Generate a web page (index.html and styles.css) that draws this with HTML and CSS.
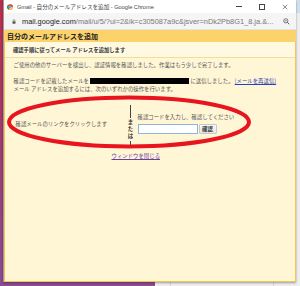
FILE: index.html
```html
<!DOCTYPE html>
<html lang="ja">

<head>
    <meta charset="UTF-8">
    <meta name="viewport" content="width=device-width, initial-scale=1.0">
    <title>Gmail - 自分のメールアドレスを追加</title>
    <link rel="stylesheet" href="styles.css">
</head>

<body>
    <div class="desktop">
        <!-- window behind the popup -->
        <div class="back-window">
            <span class="back-col"></span>
            <span class="back-col second"></span>
        </div>

        <div class="window">
            <div class="titlebar">
                <svg class="favicon" viewBox="0 0 16 16">
                    <circle cx="8" cy="8" r="7.5" fill="#db4437"/>
                    <path d="M8 8 L15.5 8 A7.5 7.5 0 0 1 4.25 14.5 Z" fill="#ffcd40"/>
                    <path d="M8 8 L4.25 14.5 A7.5 7.5 0 0 1 1.5 4.25 Z" fill="#0f9d58"/>
                    <path d="M8 0.5 A7.5 7.5 0 0 1 15.5 8 L8 8 Z" fill="#db4437"/>
                    <circle cx="8" cy="8" r="3.6" fill="#fff"/>
                    <circle cx="8" cy="8" r="2.8" fill="#4285f4"/>
                </svg>
                <span class="title">Gmail - 自分のメールアドレスを追加 - Google Chrome</span>
                <div class="controls">
                    <span class="ctl min"></span>
                    <span class="ctl max"></span>
                    <svg class="ctl close" viewBox="0 0 8 8">
                        <path d="M1 1 L7 7 M7 1 L1 7" stroke="#444" stroke-width="0.8"/>
                    </svg>
                </div>
            </div>

            <div class="addressbar">
                <svg class="lock" viewBox="0 0 8 10">
                    <path d="M2.2 4.5 V3 A1.8 1.8 0 0 1 5.8 3 V4.5" fill="none" stroke="#555" stroke-width="1"/>
                    <rect x="1" y="4.5" width="6" height="4.8" rx="0.6" fill="#555"/>
                </svg>
                <span class="url"><span class="host">mail.google.com</span>/mail/u/5/?ui=2&amp;ik=c305087a9c&amp;jsver=nDk2Pb8G1_8.ja.&amp;...</span>
                <svg class="zoom-icon" viewBox="0 0 10 10">
                    <circle cx="4" cy="4" r="3" fill="none" stroke="#555" stroke-width="1.1"/>
                    <path d="M2.6 4 H5.4" stroke="#555" stroke-width="0.9"/>
                    <path d="M6.2 6.2 L9 9" stroke="#555" stroke-width="1.4"/>
                </svg>
            </div>

            <div class="page">
                <div class="page-head">自分のメールアドレスを追加</div>
                <div class="panel">
                    <div class="step">確認手順に従ってメール アドレスを追加します</div>
                    <div class="panel-body">
                        <p class="line">ご使用の他のサーバーを検出し、認証情報を確認しました。作業はもう少しで完了します。</p>
                        <p class="line sent">確認コードを記載したメールを <span class="redact"></span> に送信しました。 <a href="#" class="resend">[メールを再送信]</a></p>
                        <p class="line">メール アドレスを追加するには、次のいずれかの操作を行います。</p>

                        <div class="choices">
                            <div class="choice-link">確認メールのリンクをクリックします</div>
                            <div class="or">
                                <span class="dash top"></span>
                                <span class="or-char">ま</span>
                                <span class="or-char">た</span>
                                <span class="or-char">は</span>
                                <span class="dash"></span>
                            </div>
                            <div class="choice-code">
                                <div>確認コードを入力し、確認してください</div>
                                <div class="code-row">
                                    <input type="text" class="code-input">
                                    <button class="confirm">確認</button>
                                </div>
                            </div>
                        </div>

                        <a href="#" class="close-link">ウィンドウを閉じる</a>
                    </div>
                </div>
            </div>
        </div>

        <!-- red marker circle drawn over the screenshot -->
        <svg class="marker" viewBox="0 0 300 286">
            <ellipse cx="129" cy="122" rx="120" ry="24.5" fill="none" stroke="#e8151f" stroke-width="4"/>
        </svg>
    </div>
</body>

</html>
```

FILE: styles.css
```css
* {
    margin: 0;
    padding: 0;
    box-sizing: border-box;
}

body {
    width: 300px;
    height: 286px;
    overflow: hidden;
    font-family: "Noto Sans CJK JP", "Noto Sans", sans-serif;
}

.desktop {
    position: relative;
    width: 300px;
    height: 286px;
    background: linear-gradient(180deg, #bd2d48 0%, #a53a6a 50%, #8c4b92 100%);
}

.back-window {
    position: absolute;
    left: 155px;
    top: 0;
    right: 0;
    bottom: 0;
    background: #eeeeee;
    border-top: 13px solid #cfe0ef;
}

.back-col {
    position: absolute;
    left: 15px;
    top: 0;
    bottom: 0;
    border-left: 1px solid #d6d6d6;
}

.back-col.second {
    left: 118px;
}

.window {
    position: absolute;
    left: 3px;
    top: 0;
    width: 293px;
    height: 282px;
    display: flex;
    flex-direction: column;
    background: #fff;
    border-left: 1px solid #9a9a9a;
    box-shadow: 0 1px 2px rgba(0, 0, 0, 0.35);
}

/* title bar */

.titlebar {
    height: 13px;
    display: flex;
    align-items: center;
    padding-left: 3px;
    background: #fff;
}

.favicon {
    width: 6px;
    height: 6px;
    margin-right: 4px;
}

.title {
    font-family: "Liberation Sans", "Noto Sans CJK JP", sans-serif;
    font-size: 5.6px;
    color: #444;
    white-space: nowrap;
}

.controls {
    margin-left: auto;
    display: flex;
    align-items: center;
    gap: 17px;
    padding-right: 8px;
}

.ctl {
    display: block;
    width: 6px;
    height: 6px;
}

.min {
    height: 0;
    border-top: 0.8px solid #444;
}

.max {
    border: 0.8px solid #444;
}

/* address bar */

.addressbar {
    height: 17px;
    display: flex;
    align-items: center;
    padding: 0 6px 0 8px;
    background: #f5f5f5;
    border-bottom: 1px solid #e2e2e2;
}

.lock {
    width: 4px;
    height: 5px;
    margin-right: 6px;
}

.url {
    font-family: "Liberation Sans", sans-serif;
    font-size: 7.4px;
    color: #777;
    white-space: nowrap;
}

.host {
    color: #222;
}

.zoom-icon {
    margin-left: auto;
    width: 7px;
    height: 7px;
}

/* page */

.page {
    flex: 1;
    display: flex;
    flex-direction: column;
    background: #fff7d9;
}

.page-head {
    height: 12px;
    line-height: 12px;
    padding-left: 3px;
    background: #fcd26b;
    font-size: 7px;
    font-weight: bold;
    color: #222;
}

.panel {
    flex: 1;
    border: 1.5px solid #f3c84f;
    border-top: none;
    background: #fff6d6;
}

.step {
    height: 16px;
    line-height: 16px;
    padding-left: 8px;
    font-size: 5.3px;
    font-weight: bold;
    color: #333;
    border-bottom: 1px solid #f6dc94;
    background: #fff9e2;
}

.panel-body {
    padding: 3px 0 0 8.5px;
    font-size: 5.4px;
    color: #555;
}

.line {
    line-height: 8px;
    white-space: nowrap;
}

.sent {
    margin-top: 8px;
}

.redact {
    display: inline-block;
    width: 99px;
    height: 6px;
    vertical-align: -1px;
    background: #000;
}

.resend {
    color: #2a3fb8;
    text-decoration: underline;
}

.choices {
    display: flex;
    align-items: center;
    margin-top: 6px;
    height: 47px;
}

.choice-link {
    flex: none;
    width: 114px;
    padding-left: 2px;
    padding-top: 3px;
    white-space: nowrap;
}

.or {
    flex: none;
    width: 6px;
    display: flex;
    flex-direction: column;
    align-items: center;
    font-weight: bold;
    color: #333;
    line-height: 7px;
    margin-top: 7px;
}

.or-char {
    display: block;
    width: 6px;
    text-align: center;
}

.dash {
    display: block;
    width: 0.8px;
    height: 6px;
    margin: 1px 0;
    background: #444;
}

.dash.top {
    height: 13px;
}

.choice-code {
    margin-left: 4px;
    white-space: nowrap;
    padding-top: 2px;
}

.code-row {
    display: flex;
    gap: 1px;
    margin-top: 3px;
}

.code-input {
    width: 60px;
    height: 10px;
    border: 1px solid #8fb3e0;
    background: #fff;
    outline: none;
}

.confirm {
    width: 18px;
    height: 10px;
    font-family: "Noto Sans CJK JP", sans-serif;
    font-size: 5.4px;
    font-weight: bold;
    color: #333;
    background: linear-gradient(#f7f7f7, #e6e6e6);
    border: 1px solid #c8c8c8;
    border-radius: 1px;
}

.close-link {
    display: block;
    margin: 5.5px 0 0 98px;
    color: #6b3fa0;
    text-decoration: underline;
    line-height: 8px;
}

.marker {
    position: absolute;
    left: 0;
    top: 0;
    width: 300px;
    height: 286px;
    pointer-events: none;
}
```
